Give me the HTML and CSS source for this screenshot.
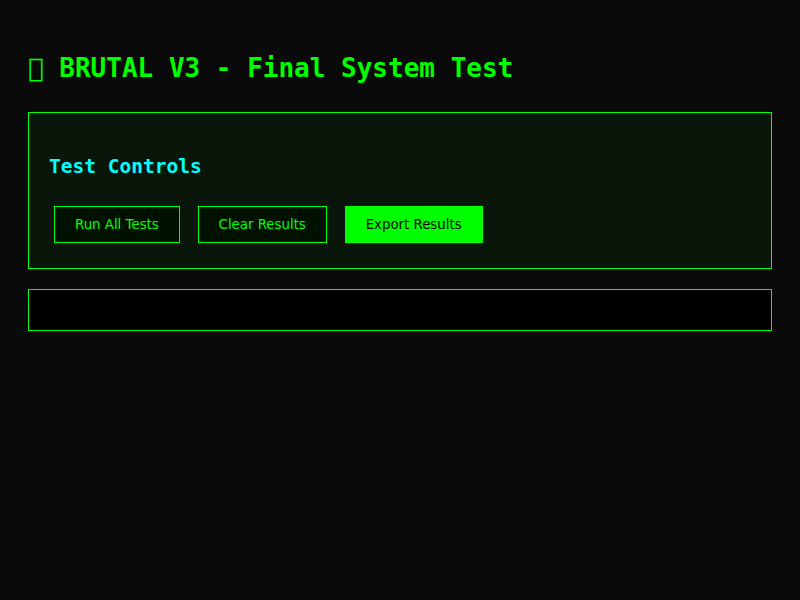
FILE: index.html
```html
<!DOCTYPE html>
<html lang="en">
<head>
<meta charset="UTF-8">
<title>BRUTAL V3 - Final System Test</title>
<link rel="stylesheet" href="styles.css">
</head>
<body>
<h1>&#xF0000; BRUTAL V3 - Final System Test</h1>
<div class="test-section">
<h2>Test Controls</h2>
<button>Run All Tests</button>
<button>Clear Results</button>
<button class="active">Export Results</button>
</div>
<div class="results"></div>
</body>
</html>
```

FILE: styles.css
```css
body {
  margin: 8px;
  padding: 20px;
  background: #0a0a0a;
  color: #00ff00;
  font-family: "DejaVu Sans Mono", monospace;
  font-size: 13px;
  line-height: 1.8;
}

h1 {
  font-size: 26px;
}

h2 {
  color: #00ffff;
  font-size: 19.5px;
}

.test-section {
  margin: 20px 0;
  padding: 20px;
  border: 1px solid #00ff00;
  background: rgba(0, 255, 0, 0.05);
}

button {
  margin: 5px;
  padding: 10px 20px;
  border: 1px solid #00ff00;
  background: #001100;
  color: #00ff00;
  font-family: "DejaVu Sans", sans-serif;
  font-size: 13.333px;
}

button.active {
  background: #00ff00;
  color: #000;
}

.results {
  padding: 20px;
  border: 1px solid #00ff00;
  background: #000;
}
```
